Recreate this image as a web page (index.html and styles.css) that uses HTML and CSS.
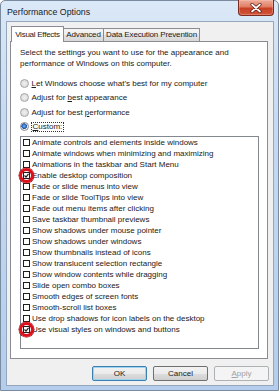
FILE: index.html
```html
<!DOCTYPE html>
<html>
<head>
<meta charset="utf-8">
<link rel="stylesheet" href="styles.css">
</head>
<body>
<div class="window">
  <div class="titlebar">
    <span class="title">Performance Options</span>
    <div class="close">
      <svg width="12" height="10" viewBox="0 0 12 10">
        <path d="M2 1.5 L10 8.5 M10 1.5 L2 8.5" stroke="#5a1a12" stroke-width="3.2" stroke-linecap="round"/>
        <path d="M2 1.5 L10 8.5 M10 1.5 L2 8.5" stroke="#ffffff" stroke-width="1.7" stroke-linecap="round"/>
      </svg>
    </div>
  </div>
  <div class="client">
    <div class="tabs">
      <div class="tab active">Visual Effects</div>
      <div class="tab">Advanced</div>
      <div class="tab">Data Execution Prevention</div>
    </div>
    <div class="panel">
      <p class="intro">Select the settings you want to use for the appearance and performance of Windows on this computer.</p>
      <div class="radios">
        <div class="radio-row"><span class="radio"></span><span><u>L</u>et Windows choose what's best for my computer</span></div>
        <div class="radio-row"><span class="radio"></span><span>Adjust for <u>b</u>est appearance</span></div>
        <div class="radio-row"><span class="radio"></span><span>Adjust for best <u>p</u>erformance</span></div>
        <div class="radio-row"><span class="radio on"></span><span class="focus"><u>C</u>ustom:</span></div>
      </div>
      <div class="listbox">
        <div class="item"><span class="cb"></span>Animate controls and elements inside windows</div>
        <div class="item"><span class="cb"></span>Animate windows when minimizing and maximizing</div>
        <div class="item"><span class="cb"></span>Animations in the taskbar and Start Menu</div>
        <div class="item"><span class="cb checked marked"><svg width="5" height="5" viewBox="0 0 5 5"><path d="M0.5 2.5 L2 4 L4.5 0.8" stroke="#222" stroke-width="1.2" fill="none"/></svg></span>Enable desktop composition</div>
        <div class="item"><span class="cb"></span>Fade or slide menus into view</div>
        <div class="item"><span class="cb"></span>Fade or slide ToolTips into view</div>
        <div class="item"><span class="cb"></span>Fade out menu items after clicking</div>
        <div class="item"><span class="cb"></span>Save taskbar thumbnail previews</div>
        <div class="item"><span class="cb"></span>Show shadows under mouse pointer</div>
        <div class="item"><span class="cb"></span>Show shadows under windows</div>
        <div class="item"><span class="cb"></span>Show thumbnails instead of icons</div>
        <div class="item"><span class="cb"></span>Show translucent selection rectangle</div>
        <div class="item"><span class="cb"></span>Show window contents while dragging</div>
        <div class="item"><span class="cb"></span>Slide open combo boxes</div>
        <div class="item"><span class="cb"></span>Smooth edges of screen fonts</div>
        <div class="item"><span class="cb"></span>Smooth-scroll list boxes</div>
        <div class="item"><span class="cb"></span>Use drop shadows for icon labels on the desktop</div>
        <div class="item"><span class="cb checked marked"><svg width="5" height="5" viewBox="0 0 5 5"><path d="M0.5 2.5 L2 4 L4.5 0.8" stroke="#222" stroke-width="1.2" fill="none"/></svg></span>Use visual styles on windows and buttons</div>
      </div>
    </div>
    <div class="buttons">
      <div class="btn default">OK</div>
      <div class="btn">Cancel</div>
      <div class="btn disabled"><u>A</u>pply</div>
    </div>
  </div>
</div>
</body>
</html>
```
FILE: styles.css
```css
html, body {
  margin: 0;
  padding: 0;
  background: #ffffff;
}
body {
  font-family: "Liberation Sans", Arial, sans-serif;
  color: #1a1a1a;
}
.window {
  width: 279px;
  height: 391px;
  box-sizing: border-box;
  border: 1px solid #7a8ba0;
  border-radius: 5px 5px 0 0;
  background: linear-gradient(180deg, #dbe8f7 0%, #c6daf1 30%, #b4cdec 100%);
  padding: 0 4px 4px 5px;
  display: flex;
  flex-direction: column;
}
.titlebar {
  height: 20px;
  display: flex;
  align-items: flex-start;
  flex-shrink: 0;
}
.title {
  font-size: 8.8px;
  line-height: 10px;
  margin-top: 6px;
  padding-left: 1px;
  color: #1b1b1b;
}
.close {
  margin-left: auto;
  margin-top: -1px;
  width: 36px;
  height: 16px;
  box-sizing: border-box;
  border: 1px solid #7b2b20;
  border-top: none;
  border-radius: 0 0 4px 4px;
  background: linear-gradient(180deg, #eeae9c 0%, #e07e64 45%, #c83f26 55%, #d0553a 100%);
  display: flex;
  align-items: center;
  justify-content: center;
  box-shadow: inset 0 0 0 1px rgba(255,200,190,0.35);
}
.client {
  flex: 1;
  background: #f0f0f0;
  border: 1px solid #95a7bd;
  display: flex;
  flex-direction: column;
}
.tabs {
  height: 19px;
  display: flex;
  align-items: flex-end;
  padding-left: 4px;
  flex-shrink: 0;
}
.tab {
  height: 13px;
  box-sizing: border-box;
  border: 1px solid #898c95;
  border-bottom: none;
  background: linear-gradient(180deg, #f5f5f5 0%, #ededed 50%, #e2e2e2 51%, #d8d8d8 100%);
  font-size: 8px;
  line-height: 12px;
  padding: 0;
  margin-left: -1px;
  white-space: nowrap;
  color: #1a1a1a;
  text-align: center;
  letter-spacing: -0.15px;
}
.tab:first-child { margin-left: 0; }
.tab.active {
  height: 16px;
  margin-bottom: -1px;
  background: #ffffff;
  position: relative;
  z-index: 1;
  padding-top: 1px;
  width: 53px;
  line-height: 14px;
  letter-spacing: -0.25px;
}
.tab:nth-child(2) { width: 41px; }
.tab:nth-child(3) { width: 97px; }
.panel {
  margin: 0 5px 0 3px;
  height: 318px;
  box-sizing: border-box;
  border: 1px solid #898c95;
  background: #ffffff;
  padding: 6px 8px 0 9px;
  flex-shrink: 0;
}
.intro {
  margin: 0;
  font-size: 8px;
  line-height: 10.5px;
  color: #1a1a1a;
  width: 225px;
}
.radios {
  margin-top: 7px;
  display: flex;
  flex-direction: column;
}
.radio-row {
  height: 14.5px;
  display: flex;
  align-items: center;
  gap: 3px;
  font-size: 8px;
  color: #1a1a1a;
}
.radio {
  width: 9px;
  height: 9px;
  box-sizing: border-box;
  border-radius: 50%;
  border: 1px solid #a5a5a5;
  background: radial-gradient(circle at 50% 50%, #f0f0f0 0%, #dcdcdc 70%, #cfcfcf 100%);
  flex-shrink: 0;
  margin-left: -0.5px;
}
.radio.on {
  border-color: #8a8a8a;
  background: radial-gradient(circle at 45% 45%, #7fb0ea 0%, #2a6fc8 35%, #1c4f9a 48%, #f6f6f6 55%, #e6e6e6 100%);
}
.focus {
  border: 1px dotted #333;
  padding: 0 1px;
  line-height: 8px;
  margin-left: -1px;
}
.listbox {
  margin-top: 2px;
  height: 213px;
  box-sizing: border-box;
  border: 1px solid #828790;
  background: #ffffff;
  padding-top: 0;
}
.item {
  height: 11px;
  display: flex;
  align-items: center;
  gap: 2px;
  padding-left: 2px;
  font-size: 8px;
  color: #1a1a1a;
  white-space: nowrap;
}
.cb {
  width: 7px;
  height: 7px;
  box-sizing: border-box;
  border: 1px solid #1e1e1e;
  background: #ffffff;
  flex-shrink: 0;
  display: flex;
  align-items: center;
  justify-content: center;
}
.cb svg { display: block; }
.marked {
  position: relative;
}
.marked::after {
  content: "";
  position: absolute;
  left: -5.5px;
  top: -5px;
  width: 15px;
  height: 15px;
  box-sizing: border-box;
  border: 3.5px solid #dc0f1b;
  border-radius: 50%;
  box-shadow: 0 0 0 0.5px #9a0710;
}
.buttons {
  display: flex;
  justify-content: flex-end;
  gap: 6px;
  padding: 7px 4px 0 0;
}
.btn {
  width: 55px;
  height: 15px;
  box-sizing: border-box;
  border: 1px solid #707070;
  border-radius: 2px;
  background: linear-gradient(180deg, #f2f2f2 0%, #ebebeb 50%, #dddddd 51%, #cfcfcf 100%);
  font-size: 8px;
  line-height: 13px;
  text-align: center;
  color: #1a1a1a;
}
.btn.default {
  border-color: #3c7fb1;
  box-shadow: inset 0 0 0 1px #9ed4f2;
}
.btn.disabled {
  border-color: #adb2b5;
  background: #f4f4f4;
  color: #a0a0a0;
}
```
